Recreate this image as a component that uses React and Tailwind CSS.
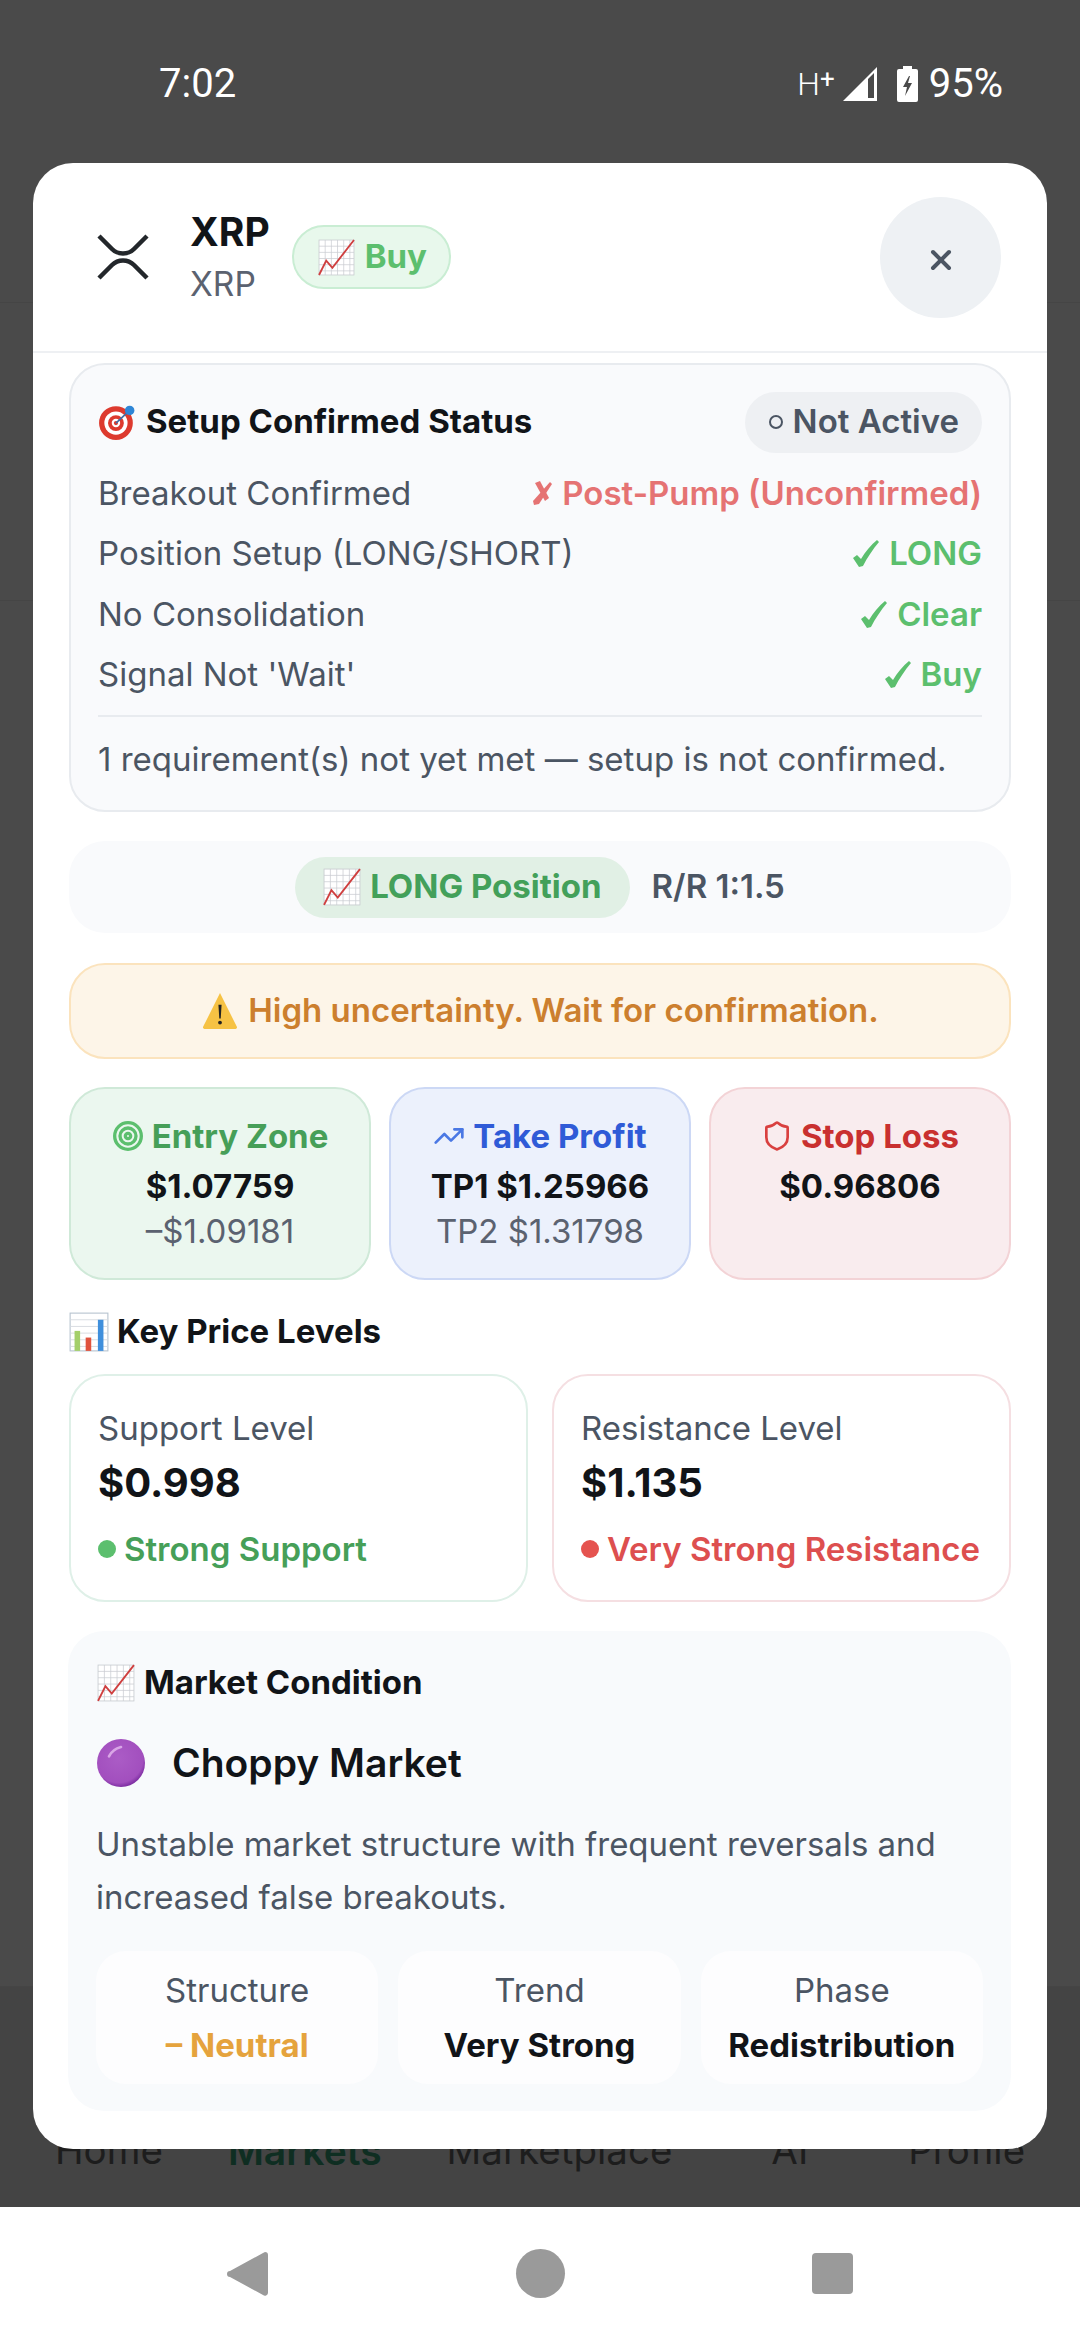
import { Target, TrendingUp, Shield, X } from "lucide-react";

const ChartEmoji = ({ className }) => (
  <svg viewBox="0 0 36 36" className={className}>
    <rect x="1" y="1" width="34" height="34" fill="#fff" stroke="#c9ccd1" strokeWidth="0.8" />
    <path d="M7 1v34M13 1v34M19 1v34M25 1v34M31 1v34M1 7h34M1 13h34M1 19h34M1 25h34M1 31h34" stroke="#c9ccd1" strokeWidth="0.7" fill="none" />
    <path d="M1 35L8 21l6 7L35 1" stroke="#cf3f3f" strokeWidth="1.8" fill="none" />
  </svg>
);

const BarsEmoji = ({ className }) => (
  <svg viewBox="0 0 36 36" className={className}>
    <rect x="1" y="1" width="34" height="34" fill="#fff" stroke="#b8c4d0" strokeWidth="1" />
    <path d="M1 7h34M1 13h34M1 19h34M1 25h34M1 31h34" stroke="#d5d9de" strokeWidth="0.8" fill="none" />
    <rect x="5" y="17" width="5" height="18" fill="#a4cf6a" />
    <rect x="15" y="23" width="5" height="12" fill="#e0533d" />
    <rect x="26" y="7" width="5" height="28" fill="#3f8fdc" />
  </svg>
);

const TargetEmoji = ({ className }) => (
  <svg viewBox="0 0 36 36" className={className}>
    <circle cx="17" cy="19" r="16" fill="#dd3a2e" />
    <circle cx="17" cy="19" r="11" fill="#fff" />
    <circle cx="17" cy="19" r="7.5" fill="#dd3a2e" />
    <circle cx="17" cy="19" r="4" fill="#fff" />
    <circle cx="17" cy="19" r="2" fill="#dd3a2e" />
    <path d="M17 19L31 6" stroke="#3a6ea8" strokeWidth="1.5" />
    <circle cx="30" cy="7" r="4.5" fill="#2f86d6" />
  </svg>
);

const WarningEmoji = ({ className }) => (
  <svg viewBox="0 0 36 36" className={className}>
    <path d="M18 1L34 33a1.500 1.500 0 0 1-1.500 2h-29A1.500 1.500 0 0 1 2 33z" fill="#f6c244" />
    <path d="M16.500 12h3l-.8 13h-1.400z" fill="#222" />
    <circle cx="18" cy="29" r="1.800" fill="#222" />
  </svg>
);

const PurpleEmoji = ({ className }) => (
  <svg viewBox="0 0 36 36" className={className}>
    <defs>
      <radialGradient id="purple" cx="45%" cy="40%" r="60%">
        <stop offset="0%" stopColor="#ab5cc6" />
        <stop offset="85%" stopColor="#a24fbe" />
        <stop offset="100%" stopColor="#7f2fa3" />
      </radialGradient>
    </defs>
    <circle cx="18" cy="18" r="18" fill="url(#purple)" />
    <path d="M9 13c2-4 5-6 9-7" stroke="#d9a6e6" strokeWidth="2" fill="none" strokeLinecap="round" />
  </svg>
);

const XrpLogo = () => (
  <svg viewBox="0 0 52 46" className="w-[52px] h-[46px]">
    <path d="M2 2l13 13c6 6 16 6 22 0L50 2M2 44l13-13c6-6 16-6 22 0l13 13" stroke="#23272b" strokeWidth="4.500" fill="none" />
  </svg>
);

const CheckMark = () => (
  <svg viewBox="0 0 26 27" className="w-[26px] h-[27px] fill-current">
    <path d="M0 18l4-3 4 4C12 12 18 5 24 0l2 2C20 9 14 18 10 26l-4 1z" />
  </svg>
);

const CrossMark = () => (
  <svg viewBox="0 0 20 24" className="w-[20px] h-[24px] fill-current">
    <path d="M3 2L8 0l9 17-4 3z" />
    <path d="M18 1l2 2L7 23l-5 1-1-4z" />
  </svg>
);

const StatusRow = ({ label, value, failed, color }) => (
  <div className="flex items-center justify-between h-[60.5px]">
    <span className="text-[#4b5563]">{label}</span>
    <span className={`flex items-center gap-[10px] font-semibold ${color}`}>
      {failed ? <CrossMark /> : <CheckMark />}
      {value}
    </span>
  </div>
);

const Stat = ({ label, value, color }) => (
  <div className="flex-1 bg-[#fdfdfe] rounded-[30px] h-[133px] flex flex-col items-center justify-center gap-[15px]">
    <span className="text-[#4b5563] text-[33px] leading-[40px]">{label}</span>
    <span className={`font-bold text-[33px] leading-[40px] ${color}`}>{value}</span>
  </div>
);

export default function App() {
  return (
    <div className="relative w-[1080px] h-[2340px] overflow-hidden bg-[#4a4a4a] font-['Inter',sans-serif]">
      {/* Dimmed page behind the modal */}
      <div className="flex flex-col h-full">
        <div className="h-[303px] border-b border-[#454545] shrink-0">
          <div className="flex items-center justify-between pt-[58px] pl-[159px] pr-[77px] h-[110px] text-white font-['Roboto'] text-[40px]">
            <span>7:02</span>
            <div className="flex items-center">
              <span className="flex items-start font-light text-[32px] leading-[36px]">
                H<span className="font-normal text-[26px] leading-[26px]">+</span>
              </span>
              <svg viewBox="0 0 34 34" className="w-[34px] h-[34px] ml-[8px]">
                <path fillRule="evenodd" d="M0 34L34 0V34Z M25 31H31V6L25 12Z" fill="#fff" />
              </svg>
              <svg viewBox="0 0 21 36" className="w-[21px] h-[36px] ml-[20px] mr-[11px]">
                <path d="M6 0h9v3h4a2 2 0 0 1 2 2v29a2 2 0 0 1-2 2H2a2 2 0 0 1-2-2V5a2 2 0 0 1 2-2h4z" fill="#fff" />
                <path d="M12 10L6 21h4l-2 9 7-13h-4l2-7z" fill="#4a4a4a" />
              </svg>
              <span>95%</span>
            </div>
          </div>
        </div>
        <div className="h-[298px] border-b border-[#454545] shrink-0" />
        <div className="h-[1386px] border-b border-[#454545] shrink-0" />
        <div className="flex-1 bg-[#444] flex items-start pl-[55px] pt-[135px] text-[38.500px] text-[#1d1d1d]">
          <span>Home</span>
          <span className="ml-[65px] text-[39px] font-semibold text-[#0f2e22]">Markets</span>
          <span className="ml-[65px]">Marketplace</span>
          <span className="ml-[99px]">AI</span>
          <span className="ml-[100px]">Profile</span>
        </div>
        <div className="h-[133px] shrink-0 bg-white flex items-center justify-center gap-[247px]">
          <svg viewBox="0 0 42 46" className="w-[42px] h-[46px]">
            <path d="M38 1a3 3 0 0 1 3 3v38a3 3 0 0 1-5 2L3 26a3 3 0 0 1 0-6L36 2z" fill="#9a9a9a" />
          </svg>
          <div className="w-[49px] h-[49px] rounded-full bg-[#9a9a9a]" />
          <div className="w-[41px] h-[41px] rounded-[4px] bg-[#9a9a9a]" />
        </div>
      </div>

      {/* Modal */}
      <div className="absolute left-[33px] top-[163px] w-[1014px] h-[1986px] bg-white rounded-[40px] overflow-hidden flex flex-col">
        <div className="h-[190px] shrink-0 border-b-2 border-[#eef0f3] flex items-center justify-between pl-[64px] pr-[46px]">
          <div className="flex items-center">
            <XrpLogo />
            <div className="ml-[41px] mb-[3px] flex flex-col">
              <span className="text-[39px] leading-[56px] font-bold text-[#111418]">XRP</span>
              <span className="text-[33.500px] leading-[48px] text-[#5b6270]">XRP</span>
            </div>
            <div className="ml-[22px] h-[64px] pl-[24px] pr-[22px] rounded-full bg-[#e8f8ec] border-2 border-[#c9edd3] flex items-center gap-[10px]">
              <ChartEmoji className="w-[37px] h-[37px]" />
              <span className="text-[33px] font-bold text-[#5cbf6e]">Buy</span>
            </div>
          </div>
          <div className="w-[121px] h-[121px] pt-[5px] rounded-full bg-[#eef1f4] flex items-center justify-center">
            <X size={32} strokeWidth={3} className="text-[#4b5563]" />
          </div>
        </div>

        <div className="px-[36px] pt-[10px] flex flex-col">
          <div className="rounded-[36px] border-2 border-[#e8ebef] bg-[#f9fafc] px-[27px] pt-[26px] h-[449px] text-[33px]">
            <div className="flex items-center justify-between h-[62px] mb-[10px]">
              <div className="flex items-center gap-[10px]">
                <TargetEmoji className="w-[38px] h-[38px]" />
                <span className="font-bold text-[#111418]">Setup Confirmed Status</span>
              </div>
              <span className="h-[61px] pl-[24px] pr-[23px] rounded-full bg-[#eef0f3] flex items-center gap-[10px] font-semibold text-[#4b5563]">
                <span className="w-[14px] h-[14px] rounded-full border-2 border-[#4b5563]" />
                Not Active
              </span>
            </div>
            <StatusRow label="Breakout Confirmed" failed value="Post-Pump (Unconfirmed)" color="text-[#e57373]" />
            <StatusRow label="Position Setup (LONG/SHORT)" value="LONG" color="text-[#5cbf6e]" />
            <StatusRow label="No Consolidation" value="Clear" color="text-[#5cbf6e]" />
            <StatusRow label="Signal Not 'Wait'" value="Buy" color="text-[#5cbf6e]" />
            <div className="border-t-2 border-[#e8ebef] mt-[10px] pt-[18px] text-[#4b5563]">
              1 requirement(s) not yet met — setup is not confirmed.
            </div>
          </div>

          <div className="mt-[29px] h-[92px] rounded-[36px] bg-[#f9fafc] flex items-center justify-center gap-[22px]">
            <div className="h-[61px] px-[28px] rounded-full bg-[#e1f0e5] flex items-center gap-[9px]">
              <ChartEmoji className="w-[38px] h-[38px]" />
              <span className="text-[33px] font-bold text-[#43a05a]">LONG Position</span>
            </div>
            <span className="text-[33px] font-semibold text-[#4b5563]">R/R 1:1.5</span>
          </div>

          <div className="mt-[30px] h-[96px] rounded-[36px] border-2 border-[#fbe3bd] bg-[#fdf5e8] flex items-center justify-center gap-[9px]">
            <WarningEmoji className="w-[38px] h-[38px]" />
            <span className="text-[33px] font-semibold text-[#cc7f2e]">High uncertainty. Wait for confirmation.</span>
          </div>

          <div className="mt-[28px] grid grid-cols-3 gap-[18px]">
            <div className="h-[193px] rounded-[36px] border-2 border-[#cfe9d8] bg-[#ebf7ef] flex flex-col items-center pt-[22px] text-[33px] leading-[50px]">
              <span className="flex items-center gap-[8px] font-bold text-[#469f58]">
                <Target size={32} strokeWidth={2.5} className="text-[#5cbf6e]" />Entry Zone
              </span>
              <span className="font-bold text-[#111418]">$1.07759</span>
              <span className="leading-[40px] text-[#5b6270]">–$1.09181</span>
            </div>
            <div className="h-[193px] rounded-[36px] border-2 border-[#ccd8f5] bg-[#ecf1fc] flex flex-col items-center pt-[22px] text-[33px] leading-[50px]">
              <span className="flex items-center gap-[8px] font-bold text-[#2f5bd7]">
                <TrendingUp size={32} strokeWidth={2} className="text-[#4a78e4]" />Take Profit
              </span>
              <span className="font-bold text-[#111418]">TP1 $1.25966</span>
              <span className="leading-[40px] text-[#5b6270]">TP2 $1.31798</span>
            </div>
            <div className="h-[193px] rounded-[36px] border-2 border-[#f3d3d6] bg-[#f9ecee] flex flex-col items-center pt-[22px] text-[33px] leading-[50px]">
              <span className="flex items-center gap-[8px] font-bold text-[#c9302f]">
                <Shield size={32} strokeWidth={2} className="text-[#d9403f]" />Stop Loss
              </span>
              <span className="font-bold text-[#111418]">$0.96806</span>
            </div>
          </div>

          <div className="mt-[32px] flex items-center gap-[8px] h-[40px]">
            <BarsEmoji className="w-[40px] h-[40px]" />
            <span className="text-[33px] font-bold text-[#111418]">Key Price Levels</span>
          </div>

          <div className="mt-[22px] grid grid-cols-2 gap-[24px]">
            <div className="h-[228px] rounded-[36px] border-2 border-[#dff0e8] bg-white px-[27px] pt-[28px]">
              <div className="text-[33px] leading-[48px] text-[#4b5563]">Support Level</div>
              <div className="text-[40px] leading-[62px] font-bold text-[#111418]">$0.998</div>
              <div className="mt-[11px] text-[33px] leading-[48px] font-semibold text-[#469f58] flex items-center gap-[8px]">
                <span className="w-[18px] h-[18px] rounded-full bg-[#5cbf6e]" />Strong Support
              </div>
            </div>
            <div className="h-[228px] rounded-[36px] border-2 border-[#f5dfe2] bg-white px-[27px] pt-[28px]">
              <div className="text-[33px] leading-[48px] text-[#4b5563]">Resistance Level</div>
              <div className="text-[40px] leading-[62px] font-bold text-[#111418]">$1.135</div>
              <div className="mt-[11px] text-[33px] leading-[48px] font-semibold text-[#dd4f4f] flex items-center gap-[8px]">
                <span className="w-[18px] h-[18px] rounded-full bg-[#e5534f]" />Very Strong Resistance
              </div>
            </div>
          </div>

          <div className="mt-[29px] -ml-[1px] h-[480px] rounded-[36px] bg-[#f8fafc] px-[28px] pt-[30px]">
            <div className="flex items-center gap-[9px] h-[44px]">
              <ChartEmoji className="ml-[1px] w-[38px] h-[38px]" />
              <span className="text-[33px] font-bold text-[#111418]">Market Condition</span>
            </div>
            <div className="mt-[28px] flex items-center gap-[27px] h-[60px]">
              <PurpleEmoji className="ml-[1px] w-[48px] h-[48px]" />
              <span className="text-[39px] font-semibold text-[#111418]">Choppy Market</span>
            </div>
            <p className="mt-[24.500px] text-[33px] leading-[53px] text-[#4b5563]">
              Unstable market structure with frequent reversals and increased false breakouts.
            </p>
            <div className="mt-[27.500px] flex gap-[20px]">
              <Stat label="Structure" value="– Neutral" color="text-[#e5a33d]" />
              <Stat label="Trend" value="Very Strong" color="text-[#111418]" />
              <Stat label="Phase" value="Redistribution" color="text-[#111418]" />
            </div>
          </div>
        </div>
      </div>
    </div>
  );
}
